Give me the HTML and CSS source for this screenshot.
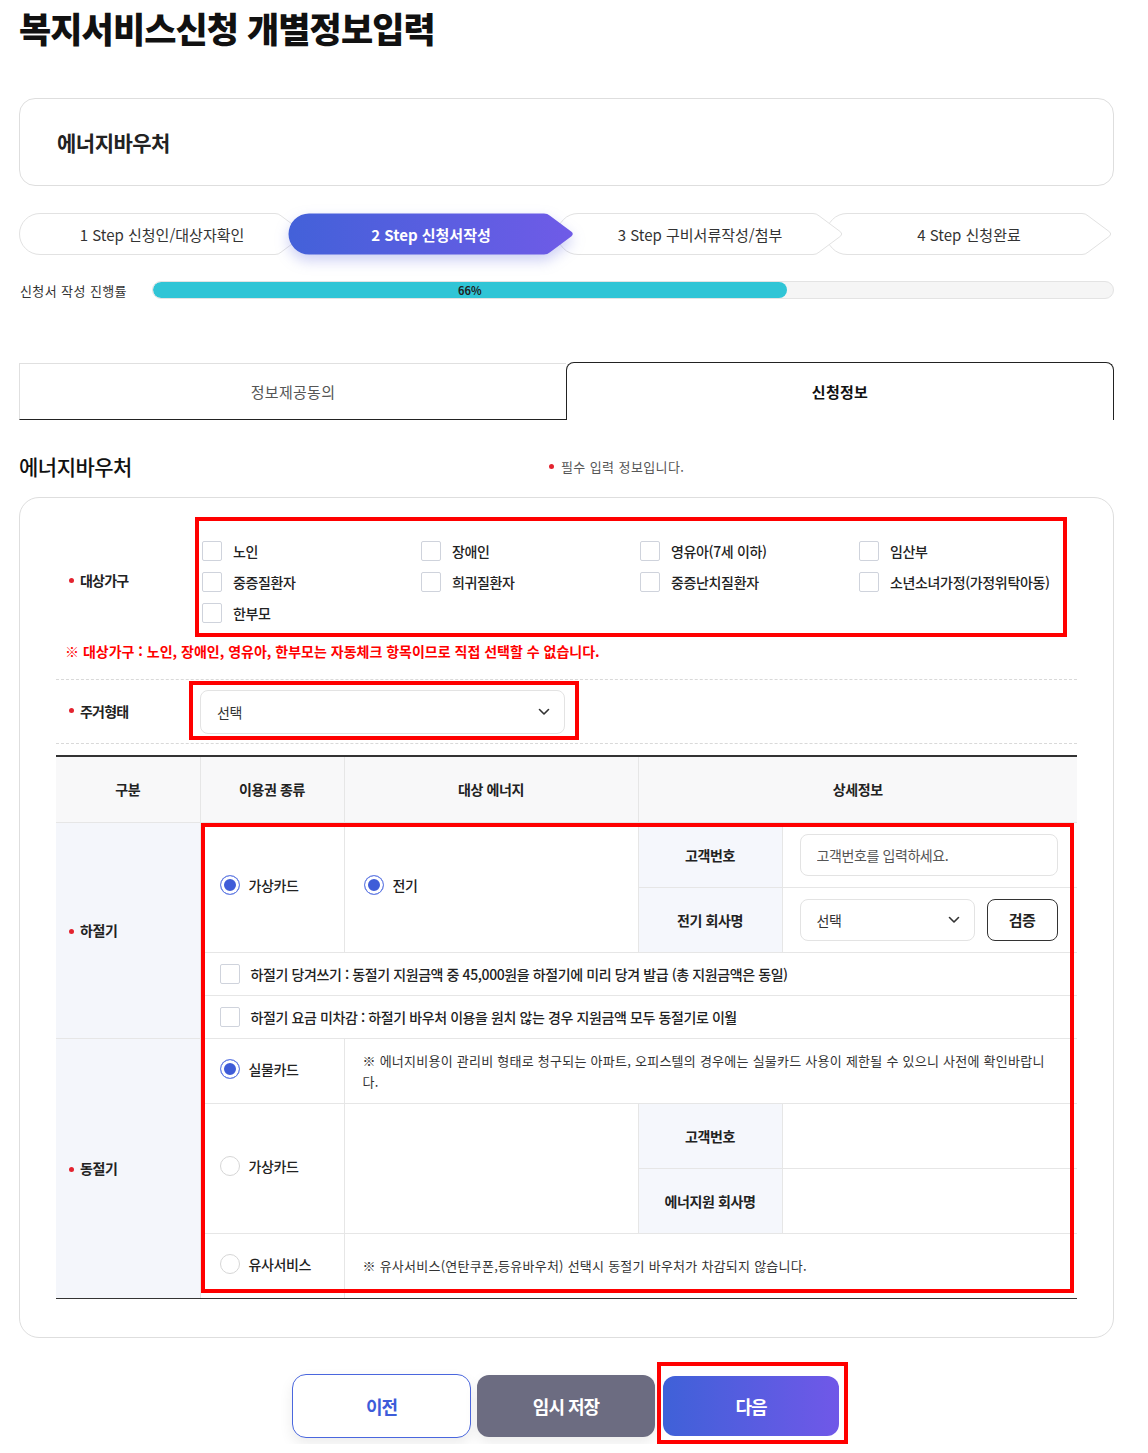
FILE: index.html
```html
<!DOCTYPE html>
<html lang="ko">
<head>
<meta charset="utf-8">
<title>복지서비스신청 개별정보입력</title>
<link rel="stylesheet" href="styles.css">
</head>
<body>
<div class="page">
  <h1 class="page-title">복지서비스신청 개별정보입력</h1>

  <div class="service-card">에너지바우처</div>

  <ol class="steps">
    <li class="step step-1">
      <svg class="step-shape" viewBox="0 0 286 42" aria-hidden="true"><path d="M21 0.5 H256 Q259.5 0.5 262 2.8 L283.5 18.8 Q286 21 283.5 23.2 L262 39.2 Q259.5 41.5 256 41.5 H21 A20.5 20.5 0 0 1 21 0.5 Z"/></svg>
      <span class="step-label">1 Step 신청인/대상자확인</span>
    </li>
    <li class="step step-2">
      <svg class="step-shape" viewBox="0 0 286 42" aria-hidden="true"><defs><linearGradient id="stepGrad" x1="0" y1="0" x2="1" y2="0"><stop offset="0" stop-color="#4361d9"/><stop offset="1" stop-color="#6f5be7"/></linearGradient></defs><path d="M21 0.5 H256 Q259.5 0.5 262 2.8 L283.5 18.8 Q286 21 283.5 23.2 L262 39.2 Q259.5 41.5 256 41.5 H21 A20.5 20.5 0 0 1 21 0.5 Z"/></svg>
      <span class="step-label">2 Step 신청서작성</span>
    </li>
    <li class="step step-3">
      <svg class="step-shape" viewBox="0 0 286 42" aria-hidden="true"><path d="M21 0.5 H256 Q259.5 0.5 262 2.8 L283.5 18.8 Q286 21 283.5 23.2 L262 39.2 Q259.5 41.5 256 41.5 H21 A20.5 20.5 0 0 1 21 0.5 Z"/></svg>
      <span class="step-label">3 Step 구비서류작성/첨부</span>
    </li>
    <li class="step step-4">
      <svg class="step-shape" viewBox="0 0 286 42" aria-hidden="true"><path d="M21 0.5 H256 Q259.5 0.5 262 2.8 L283.5 18.8 Q286 21 283.5 23.2 L262 39.2 Q259.5 41.5 256 41.5 H21 A20.5 20.5 0 0 1 21 0.5 Z"/></svg>
      <span class="step-label">4 Step 신청완료</span>
    </li>
  </ol>

  <div class="progress">
    <span class="progress-label">신청서 작성 진행률</span>
    <div class="progress-track">
      <div class="progress-fill" style="width:66%"><span>66%</span></div>
    </div>
  </div>

  <div class="tabs">
    <div class="tab tab-off">정보제공동의</div>
    <div class="tab tab-on">신청정보</div>
  </div>

  <div class="section-head">
    <h2 class="section-title">에너지바우처</h2>
    <p class="req-note"><span class="dot"></span>필수 입력 정보입니다.</p>
  </div>

  <div class="form-card">
    <div class="row-household">
      <div class="row-label"><span class="dot"></span>대상가구</div>
      <div class="check-grid annot">
        <label class="check"><input type="checkbox"><span>노인</span></label>
        <label class="check"><input type="checkbox"><span>장애인</span></label>
        <label class="check"><input type="checkbox"><span>영유아(7세 이하)</span></label>
        <label class="check"><input type="checkbox"><span>임산부</span></label>
        <label class="check"><input type="checkbox"><span>중증질환자</span></label>
        <label class="check"><input type="checkbox"><span>희귀질환자</span></label>
        <label class="check"><input type="checkbox"><span>중증난치질환자</span></label>
        <label class="check"><input type="checkbox"><span>소년소녀가정(가정위탁아동)</span></label>
        <label class="check"><input type="checkbox"><span>한부모</span></label>
      </div>
    </div>

    <p class="notice">※ 대상가구 : 노인, 장애인, 영유아, 한부모는 자동체크 항목이므로 직접 선택할 수 없습니다.</p>

    <div class="row-housing">
      <div class="row-label"><span class="dot"></span>주거형태</div>
      <div class="select-wrap annot">
        <div class="select-box">
          <span>선택</span>
          <svg class="chev" width="12" height="8" viewBox="0 0 12 8" aria-hidden="true"><path d="M1.5 1.5 L6 6 L10.5 1.5"/></svg>
        </div>
      </div>
    </div>

    <div class="table-wrap">
      <table class="voucher-table">
        <colgroup>
          <col class="c-season"><col class="c-type"><col class="c-energy"><col class="c-dlabel"><col class="c-dval">
        </colgroup>
        <thead>
          <tr class="r65">
            <th>구분</th>
            <th>이용권 종류</th>
            <th>대상 에너지</th>
            <th colspan="2">상세정보</th>
          </tr>
        </thead>
        <tbody>
          <tr class="r65">
            <th rowspan="4" class="season"><span class="dot"></span>하절기</th>
            <td rowspan="2" class="opt"><label class="radio"><input type="radio" name="summer" checked><span>가상카드</span></label></td>
            <td rowspan="2" class="opt"><label class="radio"><input type="radio" name="energy" checked><span>전기</span></label></td>
            <th class="dlabel">고객번호</th>
            <td class="dval"><input class="text-input" type="text" placeholder="고객번호를 입력하세요."></td>
          </tr>
          <tr class="r65">
            <th class="dlabel">전기 회사명</th>
            <td class="dval">
              <div class="inline">
                <div class="select-box select-small">
                  <span>선택</span>
                  <svg class="chev" width="12" height="8" viewBox="0 0 12 8" aria-hidden="true"><path d="M1.5 1.5 L6 6 L10.5 1.5"/></svg>
                </div>
                <button class="verify" type="button">검증</button>
              </div>
            </td>
          </tr>
          <tr class="r43">
            <td colspan="4" class="opt"><label class="check check-row"><input type="checkbox"><span>하절기 당겨쓰기 : 동절기 지원금액 중 45,000원을 하절기에 미리 당겨 발급 (총 지원금액은 동일)</span></label></td>
          </tr>
          <tr class="r43">
            <td colspan="4" class="opt"><label class="check check-row"><input type="checkbox"><span>하절기 요금 미차감 : 하절기 바우처 이용을 원치 않는 경우 지원금액 모두 동절기로 이월</span></label></td>
          </tr>
          <tr class="r65">
            <th rowspan="4" class="season"><span class="dot"></span>동절기</th>
            <td class="opt"><label class="radio"><input type="radio" name="winter" checked><span>실물카드</span></label></td>
            <td colspan="3" class="note">※ 에너지비용이 관리비 형태로 청구되는 아파트, 오피스텔의 경우에는 실물카드 사용이 제한될 수 있으니 사전에 확인바랍니다.</td>
          </tr>
          <tr class="r65">
            <td rowspan="2" class="opt"><label class="radio"><input type="radio" name="winter"><span>가상카드</span></label></td>
            <td rowspan="2"></td>
            <th class="dlabel">고객번호</th>
            <td class="dval"></td>
          </tr>
          <tr class="r65">
            <th class="dlabel">에너지원 회사명</th>
            <td class="dval"></td>
          </tr>
          <tr class="r65">
            <td class="opt"><label class="radio"><input type="radio" name="winter"><span>유사서비스</span></label></td>
            <td colspan="3" class="note">※ 유사서비스(연탄쿠폰,등유바우처) 선택시 동절기 바우처가 차감되지 않습니다.</td>
          </tr>
        </tbody>
      </table>
      <div class="table-annot"></div>
    </div>
  </div>

  <div class="actions">
    <button class="btn btn-prev" type="button">이전</button>
    <button class="btn btn-save" type="button">임시 저장</button>
    <div class="next-wrap annot">
      <button class="btn btn-next" type="button">다음</button>
    </div>
  </div>
</div>
</body>
</html>
```
FILE: styles.css
```css
* { box-sizing: border-box; }

html, body {
  margin: 0;
  padding: 0;
  background: #fff;
}

body {
  font-family: "Noto Sans CJK KR", "Noto Sans", sans-serif;
  font-size: 14px;
  color: #222;
}

.page {
  width: 1095px;
  margin-left: 19px;
}

.page-title {
  margin: 0;
  padding-top: 4px;
  font-size: 35px;
  line-height: 48px;
  font-weight: 900;
  letter-spacing: -0.9px;
  color: #111;
}

.service-card {
  margin-top: 46px;
  height: 88px;
  border: 1px solid #dedede;
  border-radius: 16px;
  display: flex;
  align-items: center;
  padding-left: 37px;
  font-size: 21px;
  font-weight: 700;
  letter-spacing: -0.5px;
  color: #222;
}

/* steps */
.steps {
  list-style: none;
  margin: 27px 0 0;
  padding: 0;
  display: flex;
  height: 42px;
}

.step {
  position: relative;
  flex: none;
  width: 286px;
  height: 42px;
  display: flex;
  align-items: center;
  justify-content: center;
  font-size: 15px;
  letter-spacing: 0;
  color: #333;
}

.step + .step { margin-left: -17px; }

.step-shape {
  position: absolute;
  left: 0;
  top: 0;
  width: 286px;
  height: 42px;
  overflow: visible;
}

.step-shape path {
  fill: #fff;
  stroke: #e2e2e2;
  stroke-width: 1;
}

.step-label { position: relative; }

.step-1 { z-index: 1; }
.step-2 { z-index: 4; color: #fff; font-weight: 700; }
.step-3 { z-index: 3; }
.step-4 { z-index: 2; }

.step-2 .step-shape path {
  fill: url(#stepGrad);
  stroke: none;
}

.step-2 .step-shape {
  filter: drop-shadow(0 6px 7px rgba(72, 84, 214, 0.28));
}

/* progress */
.progress {
  margin-top: 26px;
  display: flex;
  align-items: center;
  height: 18px;
}

.progress-label {
  flex: none;
  width: 133px;
  padding-left: 1px;
  font-size: 13px;
  letter-spacing: 0.4px;
  color: #333;
}

.progress-track {
  flex: 1;
  height: 18px;
  border: 1px solid #e3e3e3;
  background: #f5f5f5;
  border-radius: 9px;
  overflow: hidden;
}

.progress-fill {
  height: 100%;
  background: #30c5d6;
  border-radius: 9px;
  display: flex;
  align-items: center;
  justify-content: center;
  font-size: 11px;
  font-weight: 700;
  line-height: 1;
  color: #222;
}

/* tabs */
.tabs {
  margin-top: 63px;
  display: flex;
  height: 58px;
}

.tab {
  flex: 1;
  display: flex;
  align-items: center;
  justify-content: center;
  font-size: 15px;
  letter-spacing: 0.3px;
}

.tab-off {
  margin-top: 1px;
  border-top: 1px solid #e0e0e0;
  border-left: 1px solid #e0e0e0;
  border-bottom: 1px solid #222;
  color: #555;
}

.tab-on {
  border: 1px solid #222;
  border-bottom: none;
  border-radius: 8px 8px 0 0;
  font-weight: 700;
  color: #111;
}

/* section head */
.section-head {
  margin-top: 31px;
  height: 30px;
  display: grid;
  grid-template-columns: 530px 1fr;
  align-items: center;
}

.section-title {
  margin: 0;
  font-size: 21px;
  line-height: 30px;
  font-weight: 500;
  letter-spacing: -0.5px;
  color: #111;
}

.req-note {
  margin: 0;
  display: flex;
  align-items: center;
  gap: 7px;
  font-size: 13px;
  letter-spacing: 0.4px;
  color: #555;
}

.dot {
  display: inline-block;
  flex: none;
  width: 5px;
  height: 5px;
  border-radius: 50%;
  background: #e3232f;
}

/* form card */
.form-card {
  margin-top: 16px;
  border: 1px solid #dedede;
  border-radius: 20px;
  padding: 19px 36px 38px;
}

.annot { border: 4px solid #ff0000; }

.row-household {
  display: flex;
  align-items: center;
}

.row-label {
  flex: none;
  display: flex;
  align-items: center;
  gap: 6px;
  padding-left: 13px;
  font-size: 14px;
  font-weight: 700;
  letter-spacing: -0.8px;
  color: #222;
}

.row-household .row-label { width: 139px; margin-top: 6px; }

.check-grid {
  flex: 1;
  margin-right: 10px;
  display: grid;
  grid-template-columns: 219px 219px 219px 1fr;
  grid-auto-rows: 31px;
  padding: 14px 0 5px 3px;
}

.check {
  display: flex;
  align-items: center;
  gap: 11px;
  font-size: 14px;
  font-weight: 500;
  letter-spacing: -0.35px;
  color: #222;
}

.check input {
  -webkit-appearance: none;
  appearance: none;
  flex: none;
  margin: 0;
  width: 20px;
  height: 20px;
  border: 1px solid #cfd3dc;
  border-radius: 2px;
  background: #fff;
}

.notice {
  margin: 4px 0 0;
  padding-left: 9px;
  line-height: 20px;
  font-size: 14px;
  font-weight: 700;
  letter-spacing: 0;
  color: #ff0000;
}

.row-housing {
  margin-top: 18px;
  padding: 1px 0 3px;
  border-top: 1px dashed #d9d9d9;
  border-bottom: 1px dashed #d9d9d9;
  display: flex;
  align-items: center;
}

.row-housing .row-label { width: 133px; }

.select-wrap { padding: 5px 10px 2px 7px; }

.select-box {
  width: 365px;
  height: 44px;
  border: 1px solid #e3e3e3;
  border-radius: 8px;
  background: #fff;
  display: flex;
  align-items: center;
  justify-content: space-between;
  padding: 0 14px 0 16px;
  font-size: 14px;
  letter-spacing: -0.4px;
  color: #333;
}

.chev path {
  fill: none;
  stroke: #333;
  stroke-width: 1.6;
  stroke-linecap: round;
  stroke-linejoin: round;
}

/* table */
.table-wrap {
  position: relative;
  margin-top: 11px;
  border-top: 2px solid #333;
  border-bottom: 1px solid #333;
}

.voucher-table {
  width: 100%;
  border-collapse: collapse;
  table-layout: fixed;
  border: hidden;
}

.c-season { width: 144px; }
.c-type { width: 144px; }
.c-energy { width: 294px; }
.c-dlabel { width: 144px; }

.voucher-table th,
.voucher-table td {
  border: 1px solid #e6e6e6;
  padding: 0;
  font-size: 14px;
  letter-spacing: -0.4px;
  color: #222;
  vertical-align: middle;
}

.voucher-table th { font-weight: 700; }

.voucher-table thead th { background: #f8f8f9; }

.r65 { height: 65px; }
.r43 { height: 43px; }

.season {
  background: #f4f6fb;
  text-align: left;
  padding-left: 13px !important;
}

.season .dot { margin-right: 6px; vertical-align: middle; position: relative; top: -1px; }

.dlabel { background: #f5f7fc; }

.opt { padding-left: 19px !important; text-align: left; }

.radio {
  display: inline-flex;
  align-items: center;
  gap: 9px;
  font-weight: 500;
}

.radio input {
  -webkit-appearance: none;
  appearance: none;
  flex: none;
  margin: 0;
  width: 20px;
  height: 20px;
  border-radius: 50%;
  border: 1px solid #d6d6d6;
  background: #fff;
}

.radio input:checked {
  border: 1.5px solid #6a82e6;
  background: #3f5cd8;
  box-shadow: inset 0 0 0 3px #fff;
}

.dval { padding: 0 19px 0 17px !important; }

.text-input {
  display: block;
  width: 100%;
  height: 42px;
  border: 1px solid #e3e3e3;
  border-radius: 8px;
  padding: 0 16px;
  font-family: inherit;
  font-size: 14px;
  letter-spacing: -0.4px;
  color: #222;
  background: #fff;
  outline: none;
}

.text-input::placeholder { color: #555; }

.inline {
  display: flex;
  align-items: center;
  gap: 12px;
}

.select-small {
  width: 175px;
  height: 42px;
}

.verify {
  width: 71px;
  height: 42px;
  border: 1px solid #333;
  border-radius: 8px;
  background: #fff;
  font-family: inherit;
  font-size: 15px;
  font-weight: 700;
  letter-spacing: -0.5px;
  color: #222;
}

.check-row { font-weight: 500; letter-spacing: -0.4px; }

.note {
  padding: 0 22px 0 18px !important;
  font-size: 13px !important;
  line-height: 21px;
  letter-spacing: 0.25px !important;
  color: #333 !important;
}

.table-annot {
  position: absolute;
  left: 145px;
  top: 66px;
  width: 873px;
  height: 470px;
  border: 4px solid #ff0000;
  pointer-events: none;
}

/* actions */
.actions {
  margin-top: 24px;
  padding-left: 7px;
  display: flex;
  justify-content: center;
  align-items: flex-start;
  gap: 6px;
}

.btn {
  display: flex;
  align-items: center;
  justify-content: center;
  border: none;
  font-family: inherit;
  font-size: 18px;
  font-weight: 700;
  letter-spacing: -1px;
  cursor: pointer;
}

.btn-prev {
  margin-top: 12px;
  width: 179px;
  height: 64px;
  border: 1px solid #4a67de;
  border-radius: 14px;
  background: #fff;
  color: #3d5cd9;
  box-shadow: 0 6px 14px rgba(0, 0, 0, 0.08);
}

.btn-save {
  margin-top: 13px;
  width: 178px;
  height: 62px;
  border-radius: 12px;
  background: #6c6c81;
  color: #fff;
  box-shadow: 0 6px 14px rgba(0, 0, 0, 0.08);
}

.next-wrap {
  margin-left: -4px;
  padding: 10px 5px 4px 2px;
}

.btn-next {
  width: 176px;
  height: 60px;
  border-radius: 12px;
  background: linear-gradient(90deg, #3f61d8, #7058e8);
  color: #fff;
}
```
